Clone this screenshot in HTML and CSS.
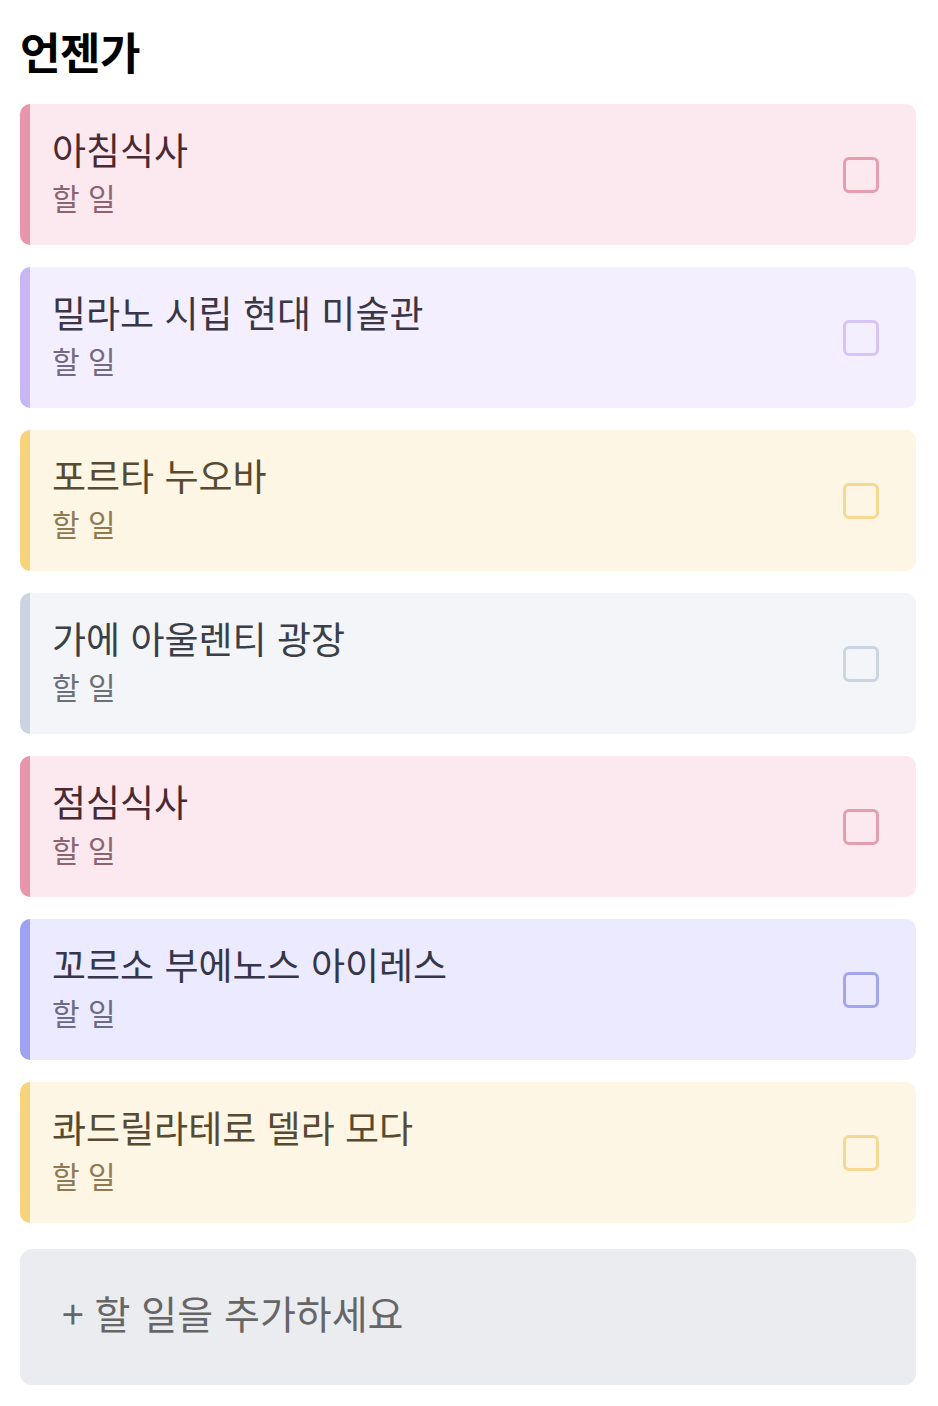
FILE: index.html
```html
<!DOCTYPE html>
<html lang="ko">
<head>
<meta charset="utf-8">
<link rel="stylesheet" href="styles.css">
</head>
<body>
<main class="page">
  <h1 class="title">언젠가</h1>
  <ul class="list">
    <li class="card pink"><div class="text"><div class="name">아침식사</div><div class="sub">할 일</div></div><span class="check"></span></li>
    <li class="card lavender"><div class="text"><div class="name">밀라노 시립 현대 미술관</div><div class="sub">할 일</div></div><span class="check"></span></li>
    <li class="card yellow"><div class="text"><div class="name">포르타 누오바</div><div class="sub">할 일</div></div><span class="check"></span></li>
    <li class="card gray"><div class="text"><div class="name">가에 아울렌티 광장</div><div class="sub">할 일</div></div><span class="check"></span></li>
    <li class="card pink"><div class="text"><div class="name">점심식사</div><div class="sub">할 일</div></div><span class="check"></span></li>
    <li class="card indigo"><div class="text"><div class="name">꼬르소 부에노스 아이레스</div><div class="sub">할 일</div></div><span class="check"></span></li>
    <li class="card yellow"><div class="text"><div class="name">콰드릴라테로 델라 모다</div><div class="sub">할 일</div></div><span class="check"></span></li>
  </ul>
  <div class="add">+ 할 일을 추가하세요</div>
</main>
</body>
</html>
```

FILE: styles.css
```css
* { box-sizing: border-box; }
html, body { margin: 0; padding: 0; background: #ffffff; }
body { font-family: "Noto Sans CJK KR", "Noto Sans", sans-serif; }
.page { padding: 22px 22px 0 20px; }
.title { margin: 0 0 24px; font-size: 44px; font-weight: 700; line-height: 58px; color: #000; letter-spacing: -0.5px; }
.list { list-style: none; margin: 0; padding: 0; display: flex; flex-direction: column; gap: 22px; }
.card { height: 141px; border-radius: 10px; border-left: 10px solid; display: flex; align-items: center; justify-content: space-between; padding: 0 37px 0 22px; }
.text { display: flex; flex-direction: column; }
.name { font-size: 37px; line-height: 44px; }
.sub { font-size: 30px; line-height: 52px; }
.check { width: 36px; height: 36px; border: 3px solid; border-radius: 6px; flex: none; }
.pink { background: #fce8ef; border-left-color: #e896aa; }
.pink .name { color: #4a2a32; }
.pink .sub { color: #8c6470; }
.pink .check { border-color: #e59db0; }
.lavender { background: #f3effe; border-left-color: #c9b7f5; }
.lavender .name { color: #3b3646; }
.lavender .sub { color: #716a82; }
.lavender .check { border-color: #d4c5f5; }
.yellow { background: #fdf6e5; border-left-color: #f7d37c; }
.yellow .name { color: #574a30; }
.yellow .sub { color: #8f7a52; }
.yellow .check { border-color: #f6d893; }
.gray { background: #f3f5f9; border-left-color: #cbd5e1; }
.gray .name { color: #3b3f47; }
.gray .sub { color: #6b7078; }
.gray .check { border-color: #ccd5e1; }
.indigo { background: #eceafe; border-left-color: #9ea2f2; }
.indigo .name { color: #35364a; }
.indigo .sub { color: #6a6b86; }
.indigo .check { border-color: #a3a6ea; }
.add { margin-top: 26px; height: 136px; border-radius: 12px; background: #ebecf0; display: flex; align-items: center; padding: 0 0 10px 42px; font-size: 39px; color: #666666; }
```
